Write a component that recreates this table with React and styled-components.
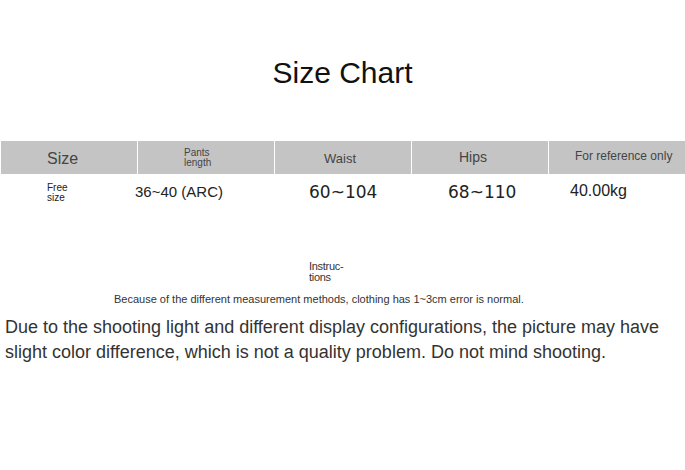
import styled, { createGlobalStyle } from "styled-components"

const GlobalStyle = createGlobalStyle`
  html, body {
    margin: 0;
    padding: 0;
    background: #ffffff;
  }
  body {
    font-family: "Liberation Sans", Arial, sans-serif;
    color: #333;
  }
`

const headers = [
  { label: "Size", size: 16, pad: 46, top: 9 },
  { label: "Pants length", size: 10, pad: 46, top: 7, narrow: true },
  { label: "Waist", size: 13, pad: 49, top: 11 },
  { label: "Hips", size: 14, pad: 47, top: 8 },
  { label: "For reference only", size: 12, pad: 26, top: 9 },
]

const values = [
  { label: "Free size", size: 10, pad: 46, top: 9, narrow: true },
  { label: "36~40 (ARC)", size: 15, pad: -3, top: 9 },
  { label: "60~104", size: 17, pad: 34, top: 9, dejavu: true },
  { label: "68~110", size: 17, pad: 36, top: 9, dejavu: true },
  { label: "40.00kg", size: 16, pad: 21, top: 8 },
]

export default function App() {
  return (
    <Page>
      <GlobalStyle />
      <Title>Size Chart</Title>

      <Table>
        <HeaderRow>
          {headers.map(h => (
            <HeaderCell key={h.label} $top={h.top}>
              <CellText $pad={h.pad} $size={h.size} $narrow={h.narrow}>{h.label}</CellText>
            </HeaderCell>
          ))}
        </HeaderRow>
        <ValueRow>
          {values.map(v => (
            <ValueCell key={v.label} $top={v.top}>
              <CellText $pad={v.pad} $size={v.size} $narrow={v.narrow} $dejavu={v.dejavu} $dark>
                {v.label}
              </CellText>
            </ValueCell>
          ))}
        </ValueRow>
      </Table>

      <Notes>
        <NoteLabel>Instruc-<br />tions</NoteLabel>
        <NoteLine>Because of the different measurement methods, clothing has 1~3cm error is normal.</NoteLine>
      </Notes>

      <Paragraph>
        Due to the shooting light and different display configurations, the picture may have
        slight color difference, which is not a quality problem. Do not mind shooting.
      </Paragraph>
    </Page>
  )
}

const Page = styled.div`
  width: 685px;
  height: 470px;
  overflow: hidden;
  background: #fff;
`
const Title = styled.h1`
  margin: 0;
  padding-top: 56px;
  height: 141px;
  box-sizing: border-box;
  text-align: center;
  font-size: 30px;
  font-weight: 400;
  color: #111;
  font-family: "Liberation Sans", Arial, sans-serif;
`
const Table = styled.div`
  padding-left: 1px;
`
const HeaderRow = styled.div`
  display: grid;
  grid-template-columns: 136px 136px 136px 136px 136px;
  column-gap: 1px;
  height: 33px;
`
const HeaderCell = styled.div`
  background: #c4c4c4;
  padding-top: ${p => p.$top}px;
  box-sizing: border-box;
`
const ValueRow = styled.div`
  display: grid;
  grid-template-columns: 136px 136px 136px 136px 136px;
  column-gap: 1px;
  height: 34px;
`
const ValueCell = styled.div`
  padding-top: ${p => p.$top}px;
  box-sizing: border-box;
`
const CellText = styled.div`
  margin-left: ${p => p.$pad}px;
  font-family: ${p => (p.$dejavu ? '"DejaVu Sans", sans-serif' : '"Liberation Sans", Arial, sans-serif')};
  font-size: ${p => p.$size}px;
  line-height: ${p => (p.$narrow ? 0.95 : 1.15)};
  color: ${p => (p.$dark ? "#222" : "#444")};
  white-space: ${p => (p.$narrow ? "normal" : "nowrap")};
  width: ${p => (p.$narrow ? "40px" : "auto")};
`
const Notes = styled.div`
  padding-top: 53px;
  display: flex;
  flex-direction: column;
`
const NoteLabel = styled.div`
  margin-left: 309px;
  font-family: "Liberation Sans", Arial, sans-serif;
  font-size: 11px;
  letter-spacing: -0.3px;
  line-height: 11px;
  color: #333;
`
const NoteLine = styled.div`
  margin: 10px 0 0 114px;
  font-family: "Liberation Sans", Arial, sans-serif;
  font-size: 11px;
  color: #333;
`
const Paragraph = styled.p`
  margin: 10px 0 0 5px;
  font-family: "Liberation Sans", Arial, sans-serif;
  font-size: 18px;
  line-height: 25px;
  color: #333;
  width: 672px;
`
